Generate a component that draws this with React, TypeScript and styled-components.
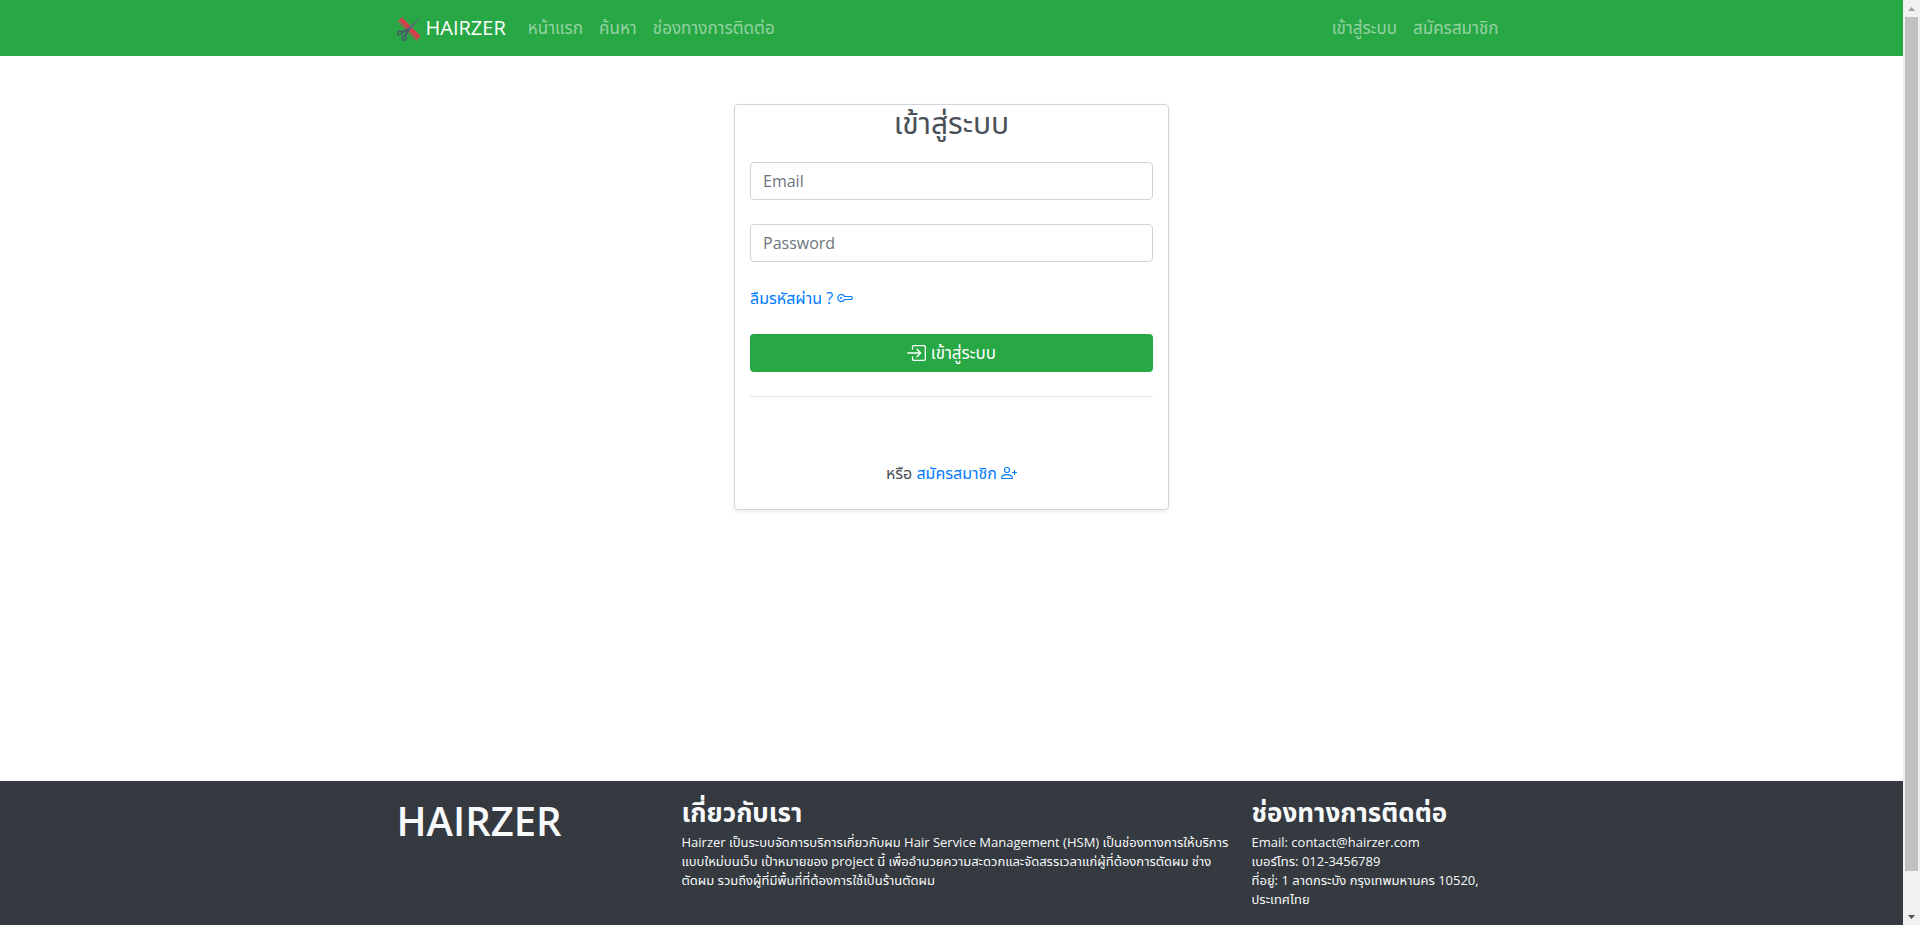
import React from "react";
import styled, { createGlobalStyle } from "styled-components";

const GlobalStyle = createGlobalStyle`
  *, *::before, *::after { box-sizing: border-box; }
  body {
    margin: 0;
    background: #fff;
    color: #495057;
    font-family: "Open Sans", "Noto Sans Thai", "Noto Sans", sans-serif;
    font-size: 16px;
    line-height: 24px;
  }
`;

const Window = styled.div`
  display: grid;
  grid-template-columns: minmax(0, 1fr) 17px;
  min-height: 100vh;
`;

const Page = styled.div`
  display: flex;
  flex-direction: column;
`;

const Container = styled.div`
  display: flex;
  width: 100%;
  max-width: 1140px;
  margin: 0 auto;
  padding: 0 15px;
`;

const Navbar = styled.header`
  display: flex;
  align-items: center;
  height: 56px;
  background: #28a745;
`;

const Brand = styled.a`
  display: flex;
  align-items: center;
  gap: 5px;
  margin-right: 14px;
  color: #fff;
  font-size: 20px;
  line-height: 30px;
  text-decoration: none;

  svg { margin-top: 2px; }
`;

const NavGroup = styled.nav<{ $end?: boolean }>`
  display: flex;
  align-items: center;
  margin-left: ${(p) => (p.$end ? "auto" : "0")};
`;

const NavLink = styled.a`
  padding: 8px;
  color: rgba(255, 255, 255, 0.5);
  font-size: 17px;
  text-decoration: none;
`;

const Main = styled.main`
  flex: 1;
  padding: 48px 15px;
`;

const Card = styled.form`
  display: flex;
  flex-direction: column;
  max-width: 435px;
  margin: 0 auto;
  padding: 0 15px 24px;
  border: 1px solid #ced4da;
  border-radius: 4px;
  box-shadow: 0 2px 4px rgba(0, 0, 0, 0.075);
`;

const Title = styled.h1`
  margin: 0 0 21px;
  font-size: 30px;
  font-weight: 400;
  line-height: 36px;
  text-align: center;
`;

const Field = styled.input`
  width: 100%;
  height: 38px;
  margin-bottom: 24px;
  padding: 6px 12px;
  border: 1px solid #ced4da;
  border-radius: 4px;
  background: #fff;
  color: #495057;
  font: inherit;

  &::placeholder {
    color: #6c757d;
    opacity: 1;
  }
`;

const TextLink = styled.a`
  color: #007bff;
  text-decoration: none;

  svg { vertical-align: -2px; }
`;

const Forgot = styled.div`
  margin-bottom: 24px;
`;

const SubmitButton = styled.button`
  display: flex;
  align-items: center;
  justify-content: center;
  gap: 5px;
  height: 38px;
  border: 0;
  border-radius: 4px;
  background: #28a745;
  color: #fff;
  font: inherit;
  font-size: 17px;
`;

const Divider = styled.hr`
  width: 100%;
  margin: 24px 0 64px;
  border: 0;
  border-top: 1px solid rgba(0, 0, 0, 0.1);
`;

const Register = styled.p`
  margin: 0;
  text-align: center;
`;

const Footer = styled.footer`
  padding: 16px 0;
  background: #343a40;
  color: #f8f9fa;
`;

const FooterColumn = styled.section<{ $span: number }>`
  flex: ${(p) => p.$span} 1 0;
  min-width: 0;
`;

const FooterBrand = styled.h2`
  margin: 0;
  font-size: 40px;
  font-weight: 600;
  line-height: 48px;
`;

const FooterTitle = styled.h3`
  margin: 0 0 6px;
  font-size: 26px;
  font-weight: 700;
  line-height: 30px;
`;

const FooterText = styled.p`
  margin: 0;
  font-size: 13px;
  line-height: 19px;
  white-space: nowrap;
`;

const Scrollbar = styled.div`
  position: sticky;
  top: 0;
  display: flex;
  flex-direction: column;
  align-items: center;
  height: 100vh;
  background: #f1f1f1;
`;

const Thumb = styled.div`
  flex: 1;
  width: 13px;
  margin-bottom: 37px;
  background: #c1c1c1;
`;

const ScrollArrow = ({ down }: { down?: boolean }) => (
  <svg width="17" height="17" viewBox="0 0 17 17" aria-hidden="true">
    <path d={down ? "M5 7h7L8.500 11z" : "M5 11h7L8.500 7z"} fill={down ? "#505050" : "#a3a3a3"} />
  </svg>
);

const Logo = () => (
  <svg width="24" height="24" viewBox="0 0 24 24" fill="none" aria-hidden="true">
    <path d="M.5 4 5 .2 23.800 19 19.500 24z" fill="#a4604f" />
    <path d="M4 2 22 20.500" stroke="#dc3a4c" strokeWidth="3.200" />
    <path d="M1.500 5 18.500 22.500" stroke="#7d7a4c" strokeWidth="1.500" strokeDasharray="1 1" />
    <path d="M24 0 9 12.500l2.500 2.500z" fill="#5c6a78" />
    <path d="M13 11.500 5 15.500M11.500 13 8 19" stroke="#4b5b6c" strokeWidth="2" />
    <circle cx="2.800" cy="16" r="2" stroke="#4b5b6c" strokeWidth="1.500" />
    <circle cx="7.300" cy="21.200" r="2" stroke="#4b5b6c" strokeWidth="1.500" />
  </svg>
);

const KeyIcon = () => (
  <svg width="16" height="16" viewBox="0 0 16 16" fill="none" stroke="currentColor" aria-hidden="true">
    <path d="M7.500 6.500A3.500 3.500 0 1 0 7.500 9.500H14.500L15.500 8 14.500 6.500z" strokeWidth="1.200" strokeLinejoin="round" />
    <circle cx="4" cy="8" r="1" fill="currentColor" stroke="none" />
  </svg>
);

const LoginIcon = () => (
  <svg width="19" height="16" viewBox="0 0 19 16" fill="none" stroke="currentColor" strokeWidth="1.300" strokeLinecap="round" strokeLinejoin="round" aria-hidden="true">
    <path d="M5.500 4V2A1.300 1.300 0 0 1 6.800.7h10.200A1.300 1.300 0 0 1 18.300 2v12a1.300 1.300 0 0 1-1.300 1.300H6.800A1.300 1.300 0 0 1 5.500 14v-2M.8 8h12.700M10 4.300 13.700 8 10 11.700" />
  </svg>
);

const PersonPlusIcon = () => (
  <svg width="16" height="16" viewBox="0 0 16 16" fill="none" stroke="currentColor" strokeWidth="1.100" strokeLinecap="round" strokeLinejoin="round" aria-hidden="true">
    <circle cx="6" cy="5" r="2.500" />
    <path d="M1.500 13.500C.8 13.500.6 13.200.6 12.800.8 11 2.500 9.600 6 9.600s5.200 1.400 5.400 3.200c0 .4-.2.700-.9.700zM13.500 5.500v4M11.500 7.500h4" />
  </svg>
);

export default function App() {
  return (
    <>
      <GlobalStyle />
      <Window>
        <Page>
          <Navbar>
            <Container>
              <Brand href="#"><Logo />HAIRZER</Brand>
              <NavGroup>
                <NavLink href="#">หน้าแรก</NavLink>
                <NavLink href="#">ค้นหา</NavLink>
                <NavLink href="#">ช่องทางการติดต่อ</NavLink>
              </NavGroup>
              <NavGroup $end>
                <NavLink href="#">เข้าสู่ระบบ</NavLink>
                <NavLink href="#">สมัครสมาชิก</NavLink>
              </NavGroup>
            </Container>
          </Navbar>
          <Main>
            <Card>
              <Title>เข้าสู่ระบบ</Title>
              <Field type="email" placeholder="Email" aria-label="Email" />
              <Field type="password" placeholder="Password" aria-label="Password" />
              <Forgot>
                <TextLink href="#">ลืมรหัสผ่าน ? <KeyIcon /></TextLink>
              </Forgot>
              <SubmitButton type="button"><LoginIcon />เข้าสู่ระบบ</SubmitButton>
              <Divider />
              <Register>
                หรือ <TextLink href="#">สมัครสมาชิก <PersonPlusIcon /></TextLink>
              </Register>
            </Card>
          </Main>
          <Footer>
            <Container>
              <FooterColumn $span={285}>
                <FooterBrand>HAIRZER</FooterBrand>
              </FooterColumn>
              <FooterColumn $span={570}>
                <FooterTitle>เกี่ยวกับเรา</FooterTitle>
                <FooterText>
                  Hairzer เป็นระบบจัดการบริการเกี่ยวกับผม Hair Service Management (HSM) เป็นช่องทางการให้บริการ<br />
                  แบบใหม่บนเว็บ เป้าหมายของ project นี้ เพื่ออำนวยความสะดวกและจัดสรรเวลาแก่ผู้ที่ต้องการตัดผม ช่าง<br />
                  ตัดผม รวมถึงผู้ที่มีพื้นที่ที่ต้องการใช้เป็นร้านตัดผม
                </FooterText>
              </FooterColumn>
              <FooterColumn $span={255}>
                <FooterTitle>ช่องทางการติดต่อ</FooterTitle>
                <FooterText>
                  Email: contact@hairzer.com<br />
                  เบอร์โทร: 012-3456789<br />
                  ที่อยู่: 1 ลาดกระบัง กรุงเทพมหานคร 10520,<br />
                  ประเทศไทย
                </FooterText>
              </FooterColumn>
            </Container>
          </Footer>
        </Page>
        <Scrollbar aria-hidden="true">
          <ScrollArrow />
          <Thumb />
          <ScrollArrow down />
        </Scrollbar>
      </Window>
    </>
  );
}
